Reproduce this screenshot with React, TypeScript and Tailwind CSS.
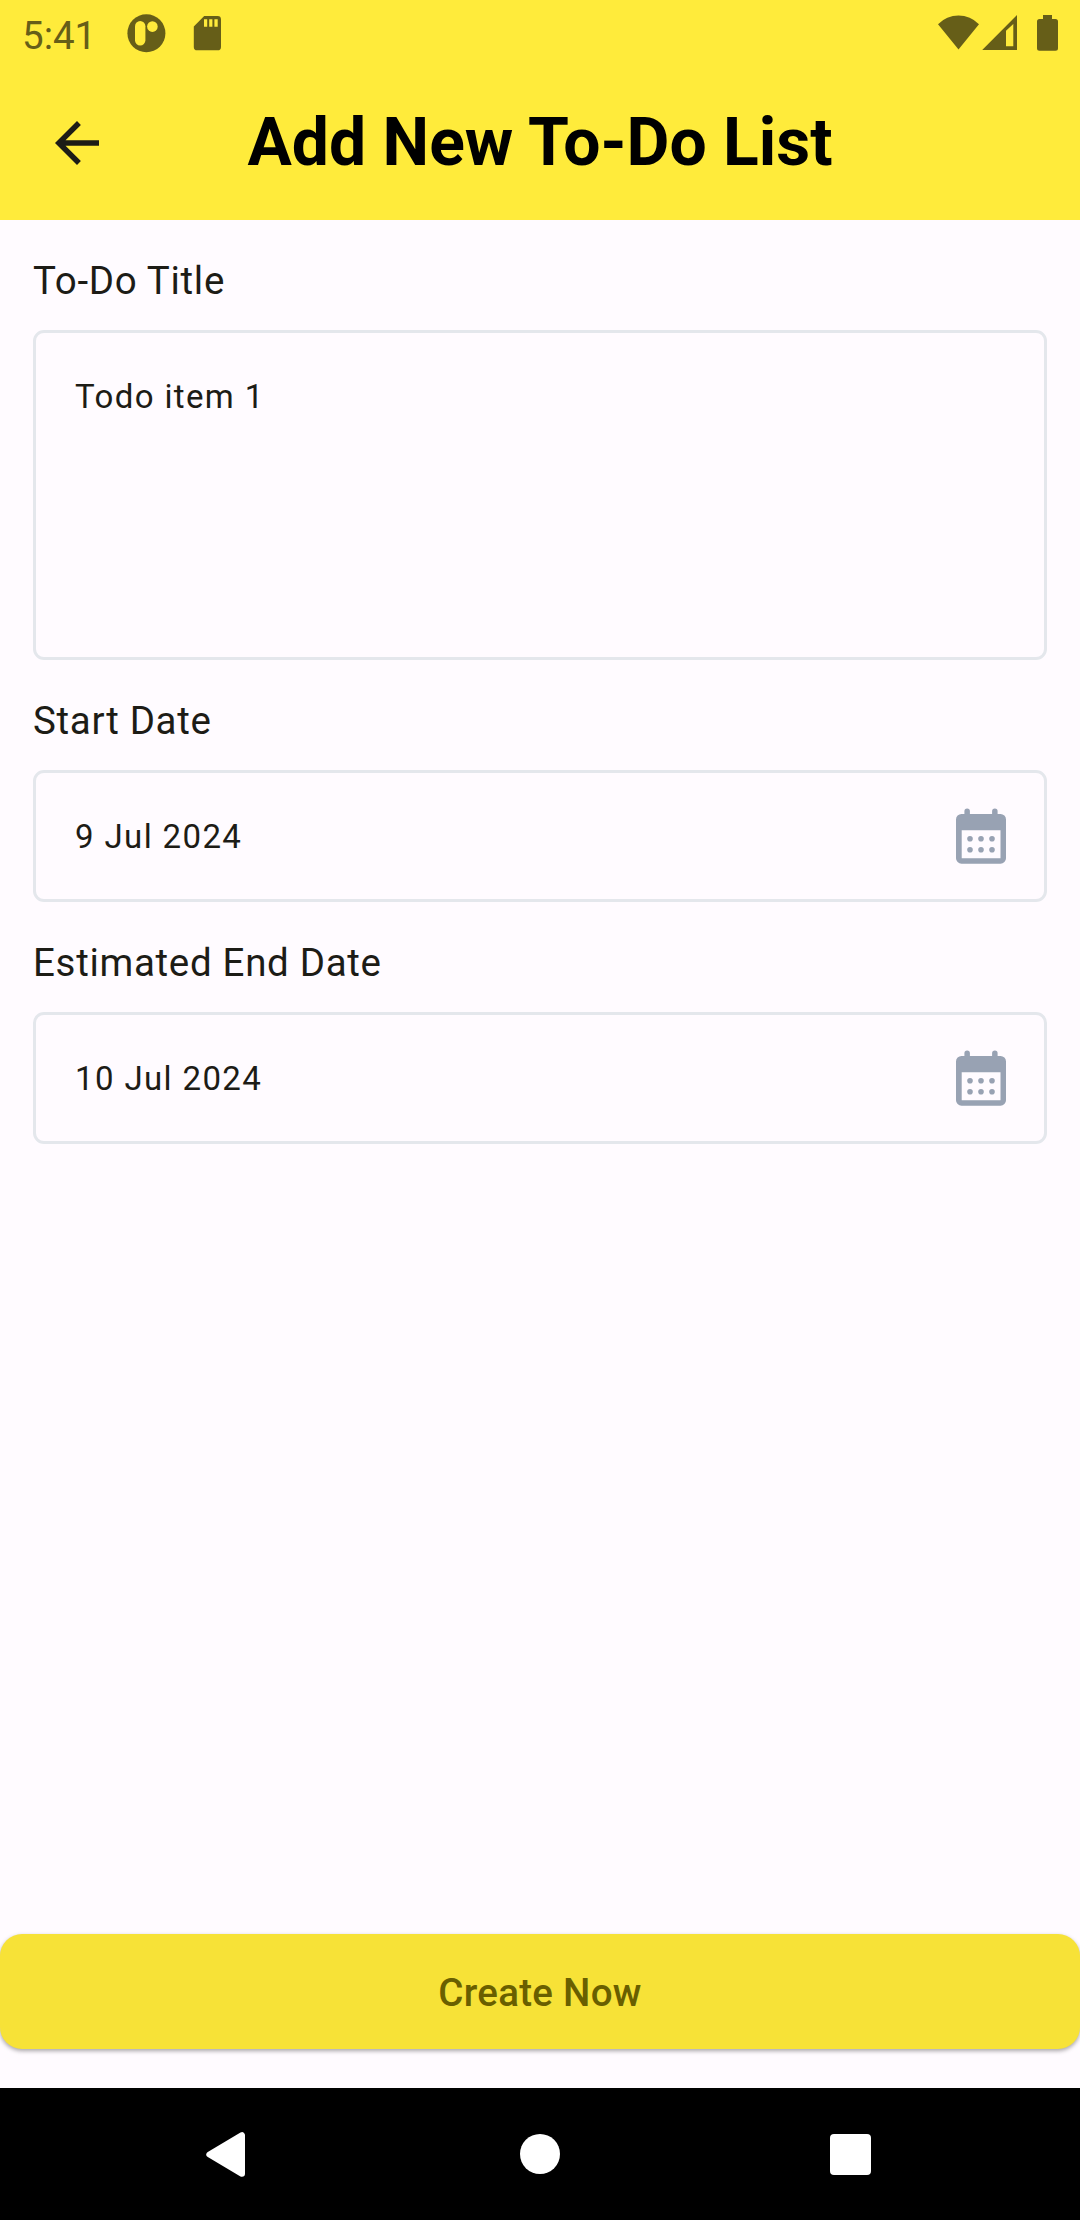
import type { ReactNode } from 'react';

function StatusBar() {
  return (
    <div className="flex h-[66px] justify-between text-[#665e18]">
      <div className="flex">
        <span className="ml-[22px] mt-[13px] w-[98px] text-[38.5px] leading-[46px]">5:41</span>
        <svg className="h-[66px] w-[120px]" viewBox="120 0 120 66" fill="currentColor">
          <circle cx="146.4" cy="33.2" r="19" />
          <rect x="135" y="21" width="10.4" height="24.4" rx="5.2" fill="#ffeb3b" />
          <circle cx="152.4" cy="26.6" r="5.3" fill="#ffeb3b" />
          <path d="M204.2 16h13.4a3.4 3.4 0 0 1 3.4 3.4v27.5a3.4 3.4 0 0 1-3.4 3.4h-20.4a3.4 3.4 0 0 1-3.4-3.4V26.4z" />
          <path d="M204 19.3h3.2v7.4H204zM209.2 19.3h3.2v7.4h-3.2zM214.4 19.3h3.3v7.4h-3.3z" fill="#ffeb3b" />
        </svg>
      </div>
      <svg className="h-[66px] w-[150px]" viewBox="930 0 150 66" fill="currentColor">
        <path d="M938 24.300a28.500 28.500 0 0 1 41 0L958.500 49.500z" />
        <path fillRule="evenodd" d="M1017 15v35h-34.800zM1006 30.800v15.400h7.300V24z" />
        <path d="M1043 15h9v4h3.500a2.500 2.500 0 0 1 2.500 2.500v26.700a2.500 2.500 0 0 1-2.500 2.500h-16a2.500 2.500 0 0 1-2.500-2.500V21.500a2.500 2.500 0 0 1 2.500-2.500h3.500z" />
      </svg>
    </div>
  );
}

function Header() {
  return (
    <header className="h-[220px] bg-[#ffeb3b]">
      <StatusBar />
      <div className="grid h-[154px] grid-cols-[154px_1fr_154px] items-start">
        <button className="ml-11 mt-11 h-[66px] w-[66px]" aria-label="Back">
          <svg className="h-full w-full" viewBox="0 0 24 24" fill="#1d1c16">
            <path d="M20 11H7.830l5.590-5.590L12 4l-8 8 8 8 1.410-1.410L7.830 13H20z" />
          </svg>
        </button>
        <h1 className="mt-[38px] text-center text-[66px] font-bold leading-[77px] text-black">Add New To-Do List</h1>
      </div>
    </header>
  );
}

function Field({ label, children }: { label: string; children: ReactNode }) {
  return (
    <section>
      <div className="flex h-[110px] items-center text-[38.5px] leading-[56px] tracking-[0.6875px]">
        <span className="mt-[12px]">{label}</span>
      </div>
      {children}
    </section>
  );
}

function CalendarIcon() {
  return (
    <svg className="h-[66px] w-[66px]" viewBox="0 0 66 66" fill="#98a2b3">
      <path
        fillRule="evenodd"
        d="M16.400 11V8.200a2.750 2.750 0 0 1 5.500 0V11h22.200V8.200a2.750 2.750 0 0 1 5.500 0V11H52.500a5.500 5.500 0 0 1 5.500 5.500v38.700a5.500 5.500 0 0 1-5.500 5.500h-39a5.500 5.500 0 0 1-5.500-5.500V16.500a5.500 5.500 0 0 1 5.500-5.500zM13.700 27.200v28h38.800v-28z"
      />
      {[22, 33, 44].map((x) => (
        <g key={x}>
          <circle cx={x} cy="35.7" r="2.8" />
          <circle cx={x} cy="46.7" r="2.8" />
        </g>
      ))}
    </svg>
  );
}

function DateBox({ value }: { value: string }) {
  return (
    <div className="flex h-[132px] items-center justify-between rounded-[11px] border-[3px] border-[#e4e7ec] pl-[39px] pr-[30px] text-[33px] leading-[48px] tracking-[1.375px]">
      <span className="pt-px">{value}</span>
      <CalendarIcon />
    </div>
  );
}

export default function App() {
  return (
    <div className="flex h-[2220px] w-[1080px] flex-col bg-[#fffbff] font-[Roboto,sans-serif] text-[#1d1c16]">
      <Header />
      <main className="flex-1 px-[33px]">
        <Field label="To-Do Title">
          <div className="h-[330px] rounded-[11px] border-[3px] border-[#e4e7ec] pl-[39px] pt-[40px] text-[33px] leading-[48px] tracking-[1.375px]">
            Todo item 1
          </div>
        </Field>
        <Field label="Start Date">
          <DateBox value="9 Jul 2024" />
        </Field>
        <Field label="Estimated End Date">
          <DateBox value="10 Jul 2024" />
        </Field>
      </main>
      <button className="mb-[39px] h-[115px] w-full rounded-[22px] bg-[#f7e237] pt-[2px] text-[38.5px] font-medium tracking-[0.275px] text-[#695f00] shadow-[0_2px_4px_rgba(0,0,0,0.35)]">
        Create Now
      </button>
      <nav className="flex h-[132px] items-center justify-between bg-black pl-[206px] pr-[209px]">
        <svg className="h-[46px] w-10" viewBox="0 0 40 46" fill="#fff" stroke="#fff" strokeWidth="6" strokeLinejoin="round">
          <path d="M3.300 23.500 36 4.200V42.800z" />
        </svg>
        <div className="ml-[3px] h-10 w-10 rounded-full bg-white" />
        <div className="h-[41px] w-[41px] rounded-[4px] bg-white" />
      </nav>
    </div>
  );
}
